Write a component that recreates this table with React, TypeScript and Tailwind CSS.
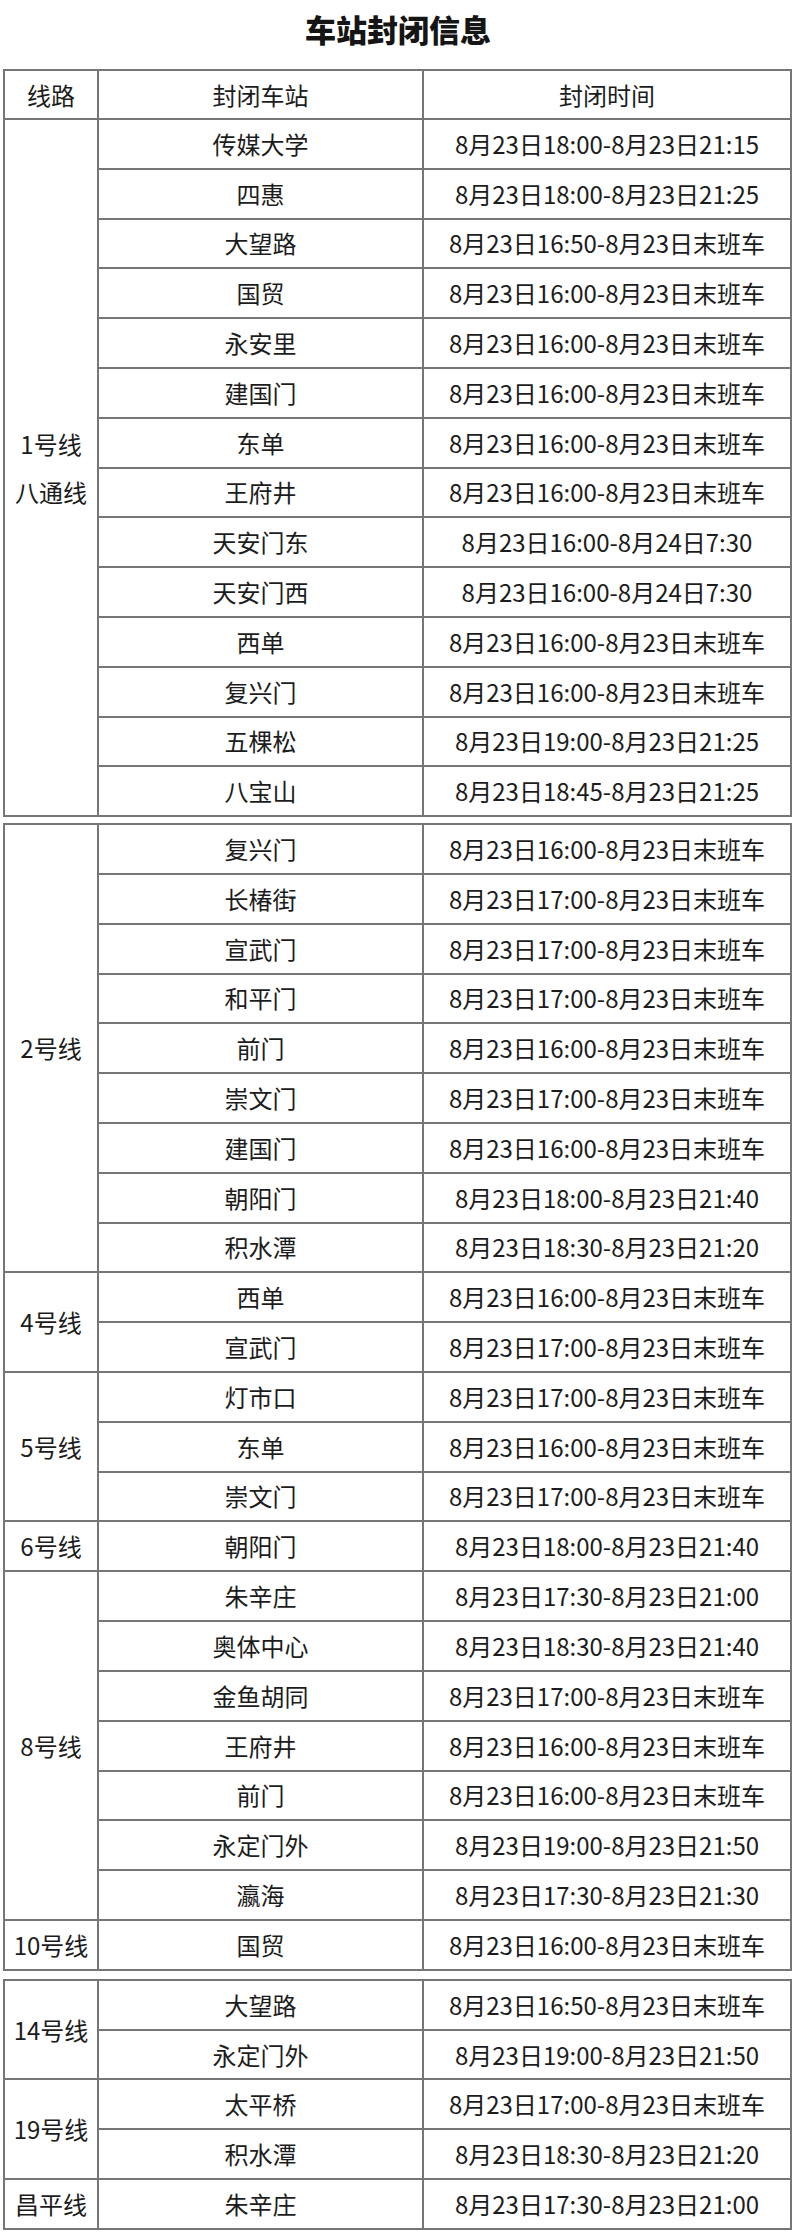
type Stop = [string, string];

interface LineGroup {
  label: string[];
  stops: Stop[];
}

const t = (a: string, b: string) => `8月23日${a}-8月23日${b}`;
const LAST = "末班车";

const firstTable: LineGroup[] = [
  {
    label: ["1号线", "八通线"],
    stops: [
      ["传媒大学", t("18:00", "21:15")],
      ["四惠", t("18:00", "21:25")],
      ["大望路", t("16:50", LAST)],
      ["国贸", t("16:00", LAST)],
      ["永安里", t("16:00", LAST)],
      ["建国门", t("16:00", LAST)],
      ["东单", t("16:00", LAST)],
      ["王府井", t("16:00", LAST)],
      ["天安门东", "8月23日16:00-8月24日7:30"],
      ["天安门西", "8月23日16:00-8月24日7:30"],
      ["西单", t("16:00", LAST)],
      ["复兴门", t("16:00", LAST)],
      ["五棵松", t("19:00", "21:25")],
      ["八宝山", t("18:45", "21:25")],
    ],
  },
];

const secondTable: LineGroup[] = [
  {
    label: ["2号线"],
    stops: [
      ["复兴门", t("16:00", LAST)],
      ["长椿街", t("17:00", LAST)],
      ["宣武门", t("17:00", LAST)],
      ["和平门", t("17:00", LAST)],
      ["前门", t("16:00", LAST)],
      ["崇文门", t("17:00", LAST)],
      ["建国门", t("16:00", LAST)],
      ["朝阳门", t("18:00", "21:40")],
      ["积水潭", t("18:30", "21:20")],
    ],
  },
  {
    label: ["4号线"],
    stops: [
      ["西单", t("16:00", LAST)],
      ["宣武门", t("17:00", LAST)],
    ],
  },
  {
    label: ["5号线"],
    stops: [
      ["灯市口", t("17:00", LAST)],
      ["东单", t("16:00", LAST)],
      ["崇文门", t("17:00", LAST)],
    ],
  },
  {
    label: ["6号线"],
    stops: [["朝阳门", t("18:00", "21:40")]],
  },
  {
    label: ["8号线"],
    stops: [
      ["朱辛庄", t("17:30", "21:00")],
      ["奥体中心", t("18:30", "21:40")],
      ["金鱼胡同", t("17:00", LAST)],
      ["王府井", t("16:00", LAST)],
      ["前门", t("16:00", LAST)],
      ["永定门外", t("19:00", "21:50")],
      ["瀛海", t("17:30", "21:30")],
    ],
  },
  {
    label: ["10号线"],
    stops: [["国贸", t("16:00", LAST)]],
  },
];

const thirdTable: LineGroup[] = [
  {
    label: ["14号线"],
    stops: [
      ["大望路", t("16:50", LAST)],
      ["永定门外", t("19:00", "21:50")],
    ],
  },
  {
    label: ["19号线"],
    stops: [
      ["太平桥", t("17:00", LAST)],
      ["积水潭", t("18:30", "21:20")],
    ],
  },
  {
    label: ["昌平线"],
    stops: [["朱辛庄", t("17:30", "21:00")]],
  },
];

function Group({ group }: { group: LineGroup }) {
  return (
    <div className="flex gap-[2px]">
      <div className="flex w-[92px] shrink-0 flex-col items-center justify-center bg-white leading-[48px]">
        {group.label.map((l) => (
          <span key={l}>{l}</span>
        ))}
      </div>
      <div className="flex flex-1 flex-col gap-[2px]">
        {group.stops.map(([station, time], i) => (
          <div key={station + i} className="flex h-[47.8px] gap-[2px]">
            <div className="flex w-[323px] shrink-0 items-center justify-center bg-white">
              {station}
            </div>
            <div className="flex flex-1 items-center justify-center bg-white">
              {time}
            </div>
          </div>
        ))}
      </div>
    </div>
  );
}

function Table({ groups, header, className }: { groups: LineGroup[]; header?: boolean; className?: string }) {
  return (
    <div className={`ml-[3px] flex w-[789px] flex-col gap-[2px] bg-[#767676] p-[2px] ${className ?? ""}`}>
      {header && (
        <div className="flex h-[47px] gap-[2px]">
          <div className="flex w-[92px] shrink-0 items-center justify-center bg-white">线路</div>
          <div className="flex w-[323px] shrink-0 items-center justify-center bg-white">封闭车站</div>
          <div className="flex flex-1 items-center justify-center bg-white">封闭时间</div>
        </div>
      )}
      {groups.map((g) => (
        <Group key={g.label.join()} group={g} />
      ))}
    </div>
  );
}

export default function App() {
  return (
    <div className="w-[796px] bg-white pb-[6px] font-['Noto_Sans_CJK_SC',sans-serif] text-[24px] text-[#1c1c1c]">
      {/* Title */}
      <div className="flex h-[69px] justify-center pt-[10px]">
        <h1 className="text-[31px] font-black leading-[38px] text-[#151515]">车站封闭信息</h1>
      </div>

      <Table groups={firstTable} header />
      <Table groups={secondTable} className="mt-[6px]" />
      <Table groups={thirdTable} className="mt-[8px]" />
    </div>
  );
}
